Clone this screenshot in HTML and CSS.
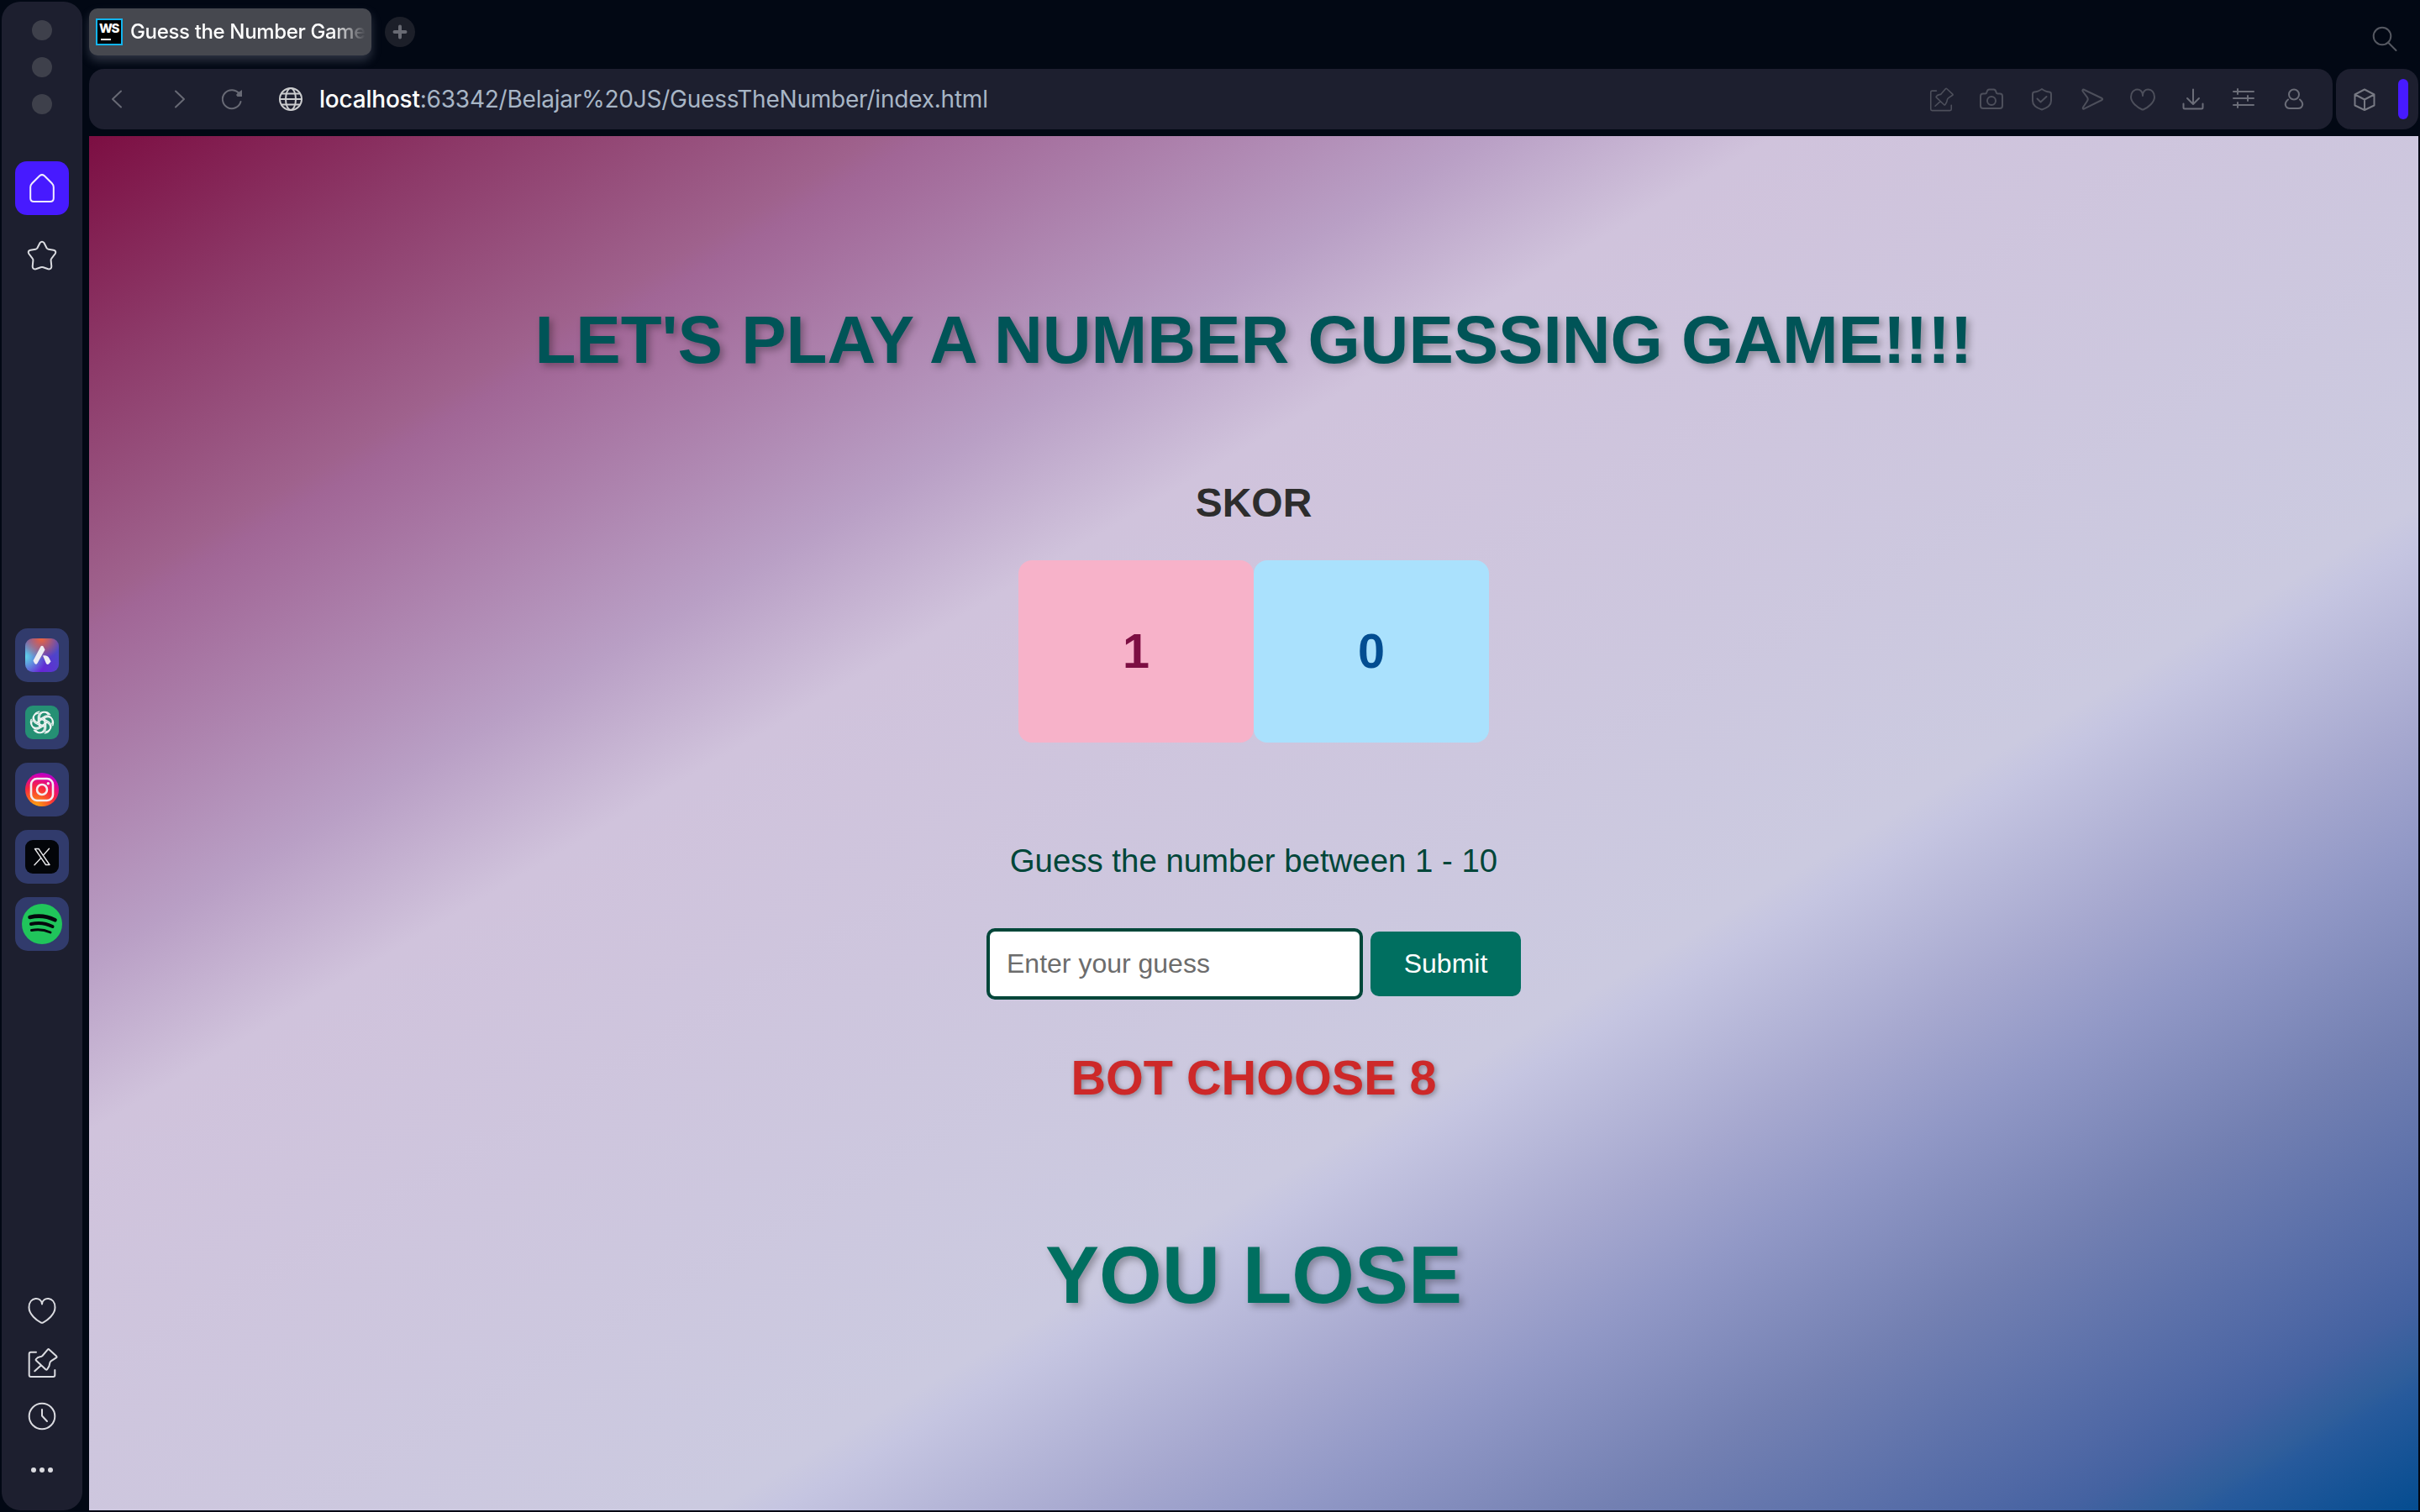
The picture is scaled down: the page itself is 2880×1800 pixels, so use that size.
FILE: index.html
```html
<!DOCTYPE html>
<html lang="en">
<head>
<meta charset="utf-8">
<title>Guess the Number Game</title>
<link rel="stylesheet" href="styles.css">
</head>
<body>
<svg class="defs" width="0" height="0" aria-hidden="true">
  <symbol id="pin" viewBox="0 0 40 40"><path d="M13 7.7H6.7q-2 0-2 2v25.300q0 2 2 2h26.600q2 0 2-2V29M11.300 30.300L19 23.300M27 4.400q.7-.7 1.400 0l8.800 8.200q.8.800 0 1.500L31 18.200q-1.500 1-1.700 2.500-.2 4-3.300 7.700-.7.700-1.400 0L12.900 17.400q-.7-.7.100-1.400 1.700-2.200 4.500-2.700 2-.2 3-1.300z"/></symbol>
  <symbol id="heart" viewBox="0 0 40 40"><path d="M20 14.500C20 5.500 35.500 5 35.500 18.500 35.500 27 26 34 21.500 36.300q-1.500.8-3 0C14 34 4.500 27 4.500 18.500 4.500 5 20 5.500 20 14.500z"/></symbol>
</svg>
<div class="browser">
  <aside class="sidebar">
    <div class="lights"><i></i><i></i><i></i></div>
    <div class="home"><svg width="40" height="40" viewBox="0 0 40 40"><path d="M17.200 5.300q2.800-2.300 5.600 0l9 9q2 2 2 4.500V32q0 4-4 4H10.200q-4 0-4-4V18.800q0-2.500 2-4.500z"/></svg></div>
    <svg class="star" width="40" height="40" viewBox="0 0 40 40"><path d="M17.500 5.200q2.500-3 5 0l3.200 6.300q.7 1 2 1.200l6 1q3.800 1 2 4.300l-4.300 5.700q-1 1.200-.8 2.500l.7 6.800q0 4-4 3.300l-5.800-2q-1.500-.5-3 0l-5.800 2q-4 .7-4-3.300l.7-6.800q.2-1.300-.8-2.500L4.300 18q-1.800-3.300 2-4.300l6-1q1.300-.2 2-1.200z"/></svg>
    <div class="apps">
      <div class="app"><span class="logo aria"><svg width="40" height="40" viewBox="0 0 40 40"><path d="M18.500 9.500q1.500-1.500 3 0l2 4-9 16q-1.500 2.500-3.500 0l-1.500-3zM21 20.500q5-1 7.500 3l2 4-2.500 3q-1.500 1.200-3-.5z"/></svg></span></div>
      <div class="app"><span class="logo gpt"><svg width="40" height="40" viewBox="0 0 40 40"><g id="knot"><path id="arm" d="M17 25V14.500q.2-5.500 5-6.800 4.500-.7 7.500 3M17 16.500l7-4q4-1.500 7 1.800 2.500 3.700.8 7.500"/><use href="#arm" transform="rotate(60 20 20)"/><use href="#arm" transform="rotate(120 20 20)"/><use href="#arm" transform="rotate(180 20 20)"/><use href="#arm" transform="rotate(240 20 20)"/><use href="#arm" transform="rotate(300 20 20)"/></g></svg></span></div>
      <div class="app"><span class="logo insta"><svg width="40" height="40" viewBox="0 0 40 40"><rect x="7" y="7" width="26" height="26" rx="7"/><circle cx="20" cy="20" r="6"/><circle class="dot" cx="27.300" cy="12.700" r="1.700"/></svg></span></div>
      <div class="app"><span class="logo x"><svg width="40" height="40" viewBox="0 0 40 40"><path d="M11.500 10.500h4.500l13 19h-4.500zM28.500 10.300L21.300 18.400M18.700 21.500L11 29.800"/></svg></span></div>
      <div class="app"><span class="logo spotify"><svg width="48" height="48" viewBox="0 0 48 48"><path class="a" d="M9.500 16q15.500-4 30 3.300"/><path class="b" d="M11 24q13.500-3.200 25.500 3"/><path class="c" d="M11.500 31.500q11.500-2.500 22.500 2.500"/></svg></span></div>
    </div>
    <div class="tools">
      <svg width="40" height="40"><use href="#heart"/></svg>
      <svg width="40" height="40"><use href="#pin"/></svg>
      <svg width="40" height="40" viewBox="0 0 40 40"><circle cx="20" cy="20" r="15.300"/><path d="M20 12v7.500l6 6.500"/></svg>
      <svg class="dots" width="40" height="40" viewBox="0 0 40 40"><circle cx="10" cy="20" r="3"/><circle cx="20" cy="20" r="3"/><circle cx="30" cy="20" r="3"/></svg>
    </div>
  </aside>
  <div class="window">
    <header class="tabs">
      <div class="tab"><span class="favicon"><b>WS</b><i></i></span><span class="tab-title">Guess the Number Game</span></div>
      <div class="plus"><svg width="36" height="36" viewBox="0 0 36 36"><path d="M18 11.500v13M11.500 18h13"/></svg></div>
      <svg class="search" width="32" height="32" viewBox="0 0 32 32"><circle cx="13" cy="13" r="10.300"/><path d="M20 20.500l9.500 9.500"/></svg>
    </header>
    <nav class="toolbar">
      <div class="address">
        <svg class="back" width="32" height="32" viewBox="0 0 32 32"><path d="M21 6.500L11 16l10 9.500"/></svg>
        <svg class="forward" width="32" height="32" viewBox="0 0 32 32"><path d="M11 6.500L21 16l-10 9.500"/></svg>
        <svg class="reload" width="32" height="32" viewBox="0 0 32 32"><path d="M26.500 19A11 11 0 1 1 25 10"/><path class="fill" d="M28 5v8h-5.500l-1.500-2 2-2.500z"/></svg>
        <svg class="globe" width="32" height="32" viewBox="0 0 32 32"><circle cx="16" cy="16" r="13"/><ellipse cx="16" cy="16" rx="6" ry="13"/><path d="M3 16h26M5 9.500h22M5 22.500h22"/></svg>
        <div class="url"><b>localhost</b>:63342/Belajar%20JS/GuessTheNumber/index.html</div>
        <div class="actions">
          <svg width="32" height="32"><use href="#pin"/></svg>
          <svg width="32" height="32" viewBox="0 0 32 32"><path d="M3 12.500q0-3 3-3h2.500q1.500 0 1.800-1.500 .8-3.500 3-3.500h5.400q2.200 0 3 3.500 .3 1.500 1.800 1.500H26q3 0 3 3V24q0 3-3 3H6q-3 0-3-3z"/><circle cx="16" cy="18" r="5"/></svg>
          <svg width="32" height="32" viewBox="0 0 32 32"><path d="M16 4q5 3.500 9 3.500 2 .3 2 2.500v8q0 7-11 10.500Q5 25 5 18v-8q0-2.200 2-2.500Q11 7.500 16 4zM10.500 15.500l4 4 7-6.500"/></svg>
          <svg width="32" height="32" viewBox="0 0 32 32"><path d="M5.500 4.500l22 10.500q1.300 1 0 2L6 27.700q-1.800.3-1-2l5-7.500q1.500-2.200 0-4.400L4.500 6.500q-.5-1.800 1-2z"/></svg>
          <svg width="32" height="32" viewBox="0 0 32 32"><path d="M16 12C15.500 1.500 30 2 30 13.500 30 20 22 26 17.500 28q-1.500.8-3 0C10 26 2 20 2 13.500 2 2 16.500 1.500 16 12z"/></svg>
          <svg class="bright" width="32" height="32" viewBox="0 0 32 32"><path d="M16 4.500v17M9 15l7 7 7-7M4.500 21.500V26q0 1.500 1.500 1.500h20q1.500 0 1.500-1.500v-4.500"/></svg>
          <svg class="bright" width="32" height="32" viewBox="0 0 32 32"><path d="M4 7h24M4 15h24M4 23h24M9 4v6M21 12v6M9 20v6"/></svg>
          <svg class="bright" width="32" height="32" viewBox="0 0 32 32"><ellipse cx="16" cy="10.500" rx="6" ry="6"/><path d="M9 16.500Q5 20 6 23.500q1 3.500 5 3.500h10q4 0 5-3.500 1-3.500-3-7"/></svg>
        </div>
      </div>
      <div class="extra">
        <svg width="32" height="32" viewBox="0 0 32 32"><path d="M16 4.500L27.500 10.500v13L16 29 4.500 23.500v-13zM4.500 10.500L16 16.500l11.500-6M16 16.500V29"/></svg>
        <span class="pill"></span>
      </div>
    </nav>
    <main class="page">
      <h1>LET'S PLAY A NUMBER GUESSING GAME!!!!</h1>
      <h2>SKOR</h2>
      <div class="scores"><div class="score player">1</div><div class="score bot">0</div></div>
      <p class="prompt">Guess the number between 1 - 10</p>
      <form class="guess"><input type="text" placeholder="Enter your guess"><button type="button">Submit</button></form>
      <p class="choice">BOT CHOOSE 8</p>
      <p class="result">YOU LOSE</p>
    </main>
  </div>
</div>
</body>
</html>
```
FILE: styles.css
```css
* { box-sizing: border-box; }
body { margin: 0; background: #020814; font-family: "Liberation Sans", Arial, sans-serif; }
h1, h2, p { margin: 0; }
svg { display: block; fill: none; stroke-linecap: round; stroke-linejoin: round; flex: none; }
.defs { position: absolute; }
.browser { display: flex; width: 2880px; height: 1800px; padding: 2px 2px 2px; gap: 8px; }

.sidebar { width: 96px; height: 1796px; border-radius: 22px; background: #1d1f2f; display: flex; flex-direction: column; align-items: center; padding: 22px 0 28px; stroke: #dadbe0; stroke-width: 2; }
.lights { display: flex; flex-direction: column; gap: 20px; }
.lights i { width: 24px; height: 24px; border-radius: 50%; background: #3e404b; }
.home { width: 64px; height: 64px; margin-top: 56px; border-radius: 14px; background: #471aff; display: flex; align-items: center; justify-content: center; stroke: #f1edff; }
.star { margin-top: 28px; }
.apps { display: flex; flex-direction: column; gap: 16px; margin-top: 424px; }
.app { width: 64px; height: 64px; border-radius: 15px; background: #313b6c; display: flex; align-items: center; justify-content: center; }
.logo { width: 40px; height: 40px; border-radius: 9px; overflow: hidden; }
.aria { background: radial-gradient(circle at 48% 0, #f0653d 0, rgba(240,101,61,0) 55%), radial-gradient(circle at 0 55%, #62d5e8 0, rgba(98,213,232,0) 55%), radial-gradient(circle at 40% 100%, #6a22d8 0, #4a49c8 70%); }
.aria svg { fill: #ededf3; stroke: none; }
.gpt { background: #259074; stroke: #f0f4f3; stroke-width: 1.500; }
.insta { border-radius: 50%; background: radial-gradient(circle at 30% 105%, #fcb50c 0, #fb6a20 25%, #f8263f 50%, #d800a8 75%, #6b13ff 105%); stroke: #f3edf2; stroke-width: 2.600; }
.insta .dot { fill: #f3edf2; stroke: none; }
.x { background: #030509; stroke: #e8e8ea; stroke-width: 1.400; }
.spotify { width: 48px; height: 48px; border-radius: 50%; background: #20c55b; stroke: #05080d; }
.spotify .a { stroke-width: 4.600; }
.spotify .b { stroke-width: 4; }
.spotify .c { stroke-width: 3; }
.tools { display: flex; flex-direction: column; gap: 24px; margin-top: auto; }
.tools .dots { fill: #dadbe0; stroke: none; }

.window { width: 2772px; display: flex; flex-direction: column; gap: 8px; }
.tabs { display: flex; height: 72px; padding: 8px 24px 0 0; align-items: flex-start; }
.tab { width: 336px; height: 56px; border-radius: 10px; background: #46484f; box-shadow: 0 6px 12px rgba(150,153,175,.3); display: flex; align-items: center; padding: 0 7px 0 8px; gap: 9px; }
.favicon { width: 32px; height: 32px; flex: none; background: #000; border: 2px solid #12b4ee; display: flex; flex-direction: column; color: #fff; padding: 2px 2px; }
.favicon b { font: 800 15px/16px Inter, sans-serif; letter-spacing: -1.300px; }
.favicon i { width: 12px; height: 2px; margin: 4px 0 0 2px; background: #fff; }
.tab-title { flex: 1; overflow: hidden; white-space: nowrap; font: 500 24px/32px Inter, sans-serif; letter-spacing: -.35px; color: #fff; -webkit-mask-image: linear-gradient(to right, #000 86%, transparent 100%); mask-image: linear-gradient(to right, #000 86%, transparent 100%); }
.plus { width: 36px; height: 36px; margin: 10px 0 0 16px; border-radius: 50%; background: #1c1f29; stroke: #686a73; stroke-width: 4; }
.search { margin: 20px 0 0 auto; stroke: #555861; stroke-width: 2; }
.toolbar { display: flex; gap: 4px; height: 72px; }
.address { flex: 1; border-radius: 18px; background: #1d1f2f; display: flex; align-items: center; padding: 0 30px 0 17px; stroke: #686a75; stroke-width: 2; }
.forward { margin-left: 43px; }
.reload { margin-left: 30px; }
.reload .fill { fill: #686a75; stroke: none; }
.globe { margin-left: 38px; stroke: #cbccce; }
.url { margin-left: 18px; font: 400 28px/36px Inter, sans-serif; letter-spacing: -.22px; color: #a8b6c6; white-space: nowrap; }
.url b { font-weight: 500; color: #fff; }
.actions { display: flex; gap: 28px; margin-left: auto; stroke: #4d4f5b; }
.bright { stroke: #6b6d78; }
.extra { width: 98px; border-radius: 18px; background: #1d1f2f; display: flex; align-items: center; justify-content: space-between; padding: 0 12px 0 18px; stroke: #777983; stroke-width: 2; }
.pill { width: 12px; height: 48px; border-radius: 6px; background: #471aff; }

.page { height: 1636px; flex: none; display: flex; flex-direction: column; align-items: center; padding-top: 197px; background: linear-gradient(to bottom right, #7c0e42 0%, #8d3a69 8.500%, #9f628d 17%, #a16696 18%, #b99fc5 30%, #d0c3dc 36.200%, #cbcae0 63.400%, #c5c5e1 64.800%, #a6a8cf 71.500%, #9198c6 75.800%, #7380b2 82.500%, #4f68a5 90.500%, #4462a1 92.500%, #2f5e9b 94.800%, #275a9c 95.500%, #044c90 100%); }
h1 { font-size: 80px; line-height: 92px; color: #005457; text-shadow: 4px 4px 8px rgba(0,0,0,.3); white-space: nowrap; }
h2 { margin-top: 120px; font-size: 48px; line-height: 56px; color: #2d2d2d; }
.scores { display: flex; margin-top: 40px; }
.score { width: 280px; height: 217px; border-radius: 16px; display: flex; align-items: center; justify-content: center; font-size: 57.6px; font-weight: 700; padding-bottom: 2px; }
.player { background: #f7b2c9; color: #7c0e42; }
.bot { background: #aae1fd; color: #034d91; }
.prompt { margin-top: 118px; font-size: 38.4px; line-height: 46px; color: #004639; }
.guess { display: flex; align-items: center; gap: 9px; margin-top: 57px; }
input { width: 448px; height: 85px; border: 4px solid #004639; border-radius: 10px; padding: 0 20px; background: #fff; font: 32px "Liberation Sans", Arial, sans-serif; }
input::placeholder { color: #6c6c6c; }
button { width: 179px; height: 77px; border: 0; border-radius: 10px; background: #006f60; color: #fff; font: 32px "Liberation Sans", Arial, sans-serif; }
.choice { margin-top: 60px; font-size: 57.6px; line-height: 66px; font-weight: 700; color: #cd2929; text-shadow: 2px 2px 6px rgba(0,0,0,.35); }
.result { margin-top: 147px; font-size: 96px; line-height: 110px; font-weight: 700; color: #006f60; text-shadow: 4px 4px 8px rgba(0,0,0,.3); }
```
